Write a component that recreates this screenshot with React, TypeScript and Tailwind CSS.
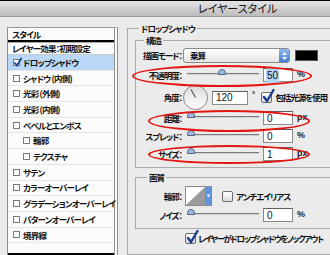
import React from "react";

const leftRows: { label: string; indent?: boolean; checked?: boolean; active?: boolean }[] = [
  { label: "ドロップシャドウ", checked: true, active: true },
  { label: "シャドウ (内側)" },
  { label: "光彩 (外側)" },
  { label: "光彩 (内側)" },
  { label: "ベベルとエンボス" },
  { label: "輪郭", indent: true },
  { label: "テクスチャ", indent: true },
  { label: "サテン" },
  { label: "カラーオーバーレイ" },
  { label: "グラデーションオーバーレイ" },
  { label: "パターンオーバーレイ" },
  { label: "境界線" },
];

const SmallBox = ({ checked }: { checked?: boolean }) => (
  <span className="relative w-[7px] h-[7px] border border-[#7a7a7a] bg-white shrink-0">
    {checked && (
      <svg className="absolute -top-[3px] -left-[1px]" width="10" height="10" viewBox="0 0 10 10">
        <path d="M1.5 5.5 L4 8.5 L8.5 1" stroke="#1d3f9a" strokeWidth="1.8" fill="none" />
      </svg>
    )}
  </span>
);

const AquaCheck = ({ checked }: { checked?: boolean }) => (
  <span className="relative w-[11px] h-[11px] rounded-[2px] border border-[#6d6d6d] bg-gradient-to-b from-white to-[#dcdcdc] shrink-0 block">
    {checked && (
      <svg className="absolute -top-[4px] left-0" width="13" height="14" viewBox="0 0 13 14">
        <path d="M2 8 L5 12 L11.5 1" stroke="#1c3d8f" strokeWidth="2.4" fill="none" strokeLinecap="round" />
      </svg>
    )}
  </span>
);

const Slider = ({ pos }: { pos: number }) => (
  <div className="relative ml-[5px] w-[72px] h-[12px] shrink-0">
    <div className="absolute left-0 right-0 top-[4px] h-[2px] bg-[#7b7b7b] border-b border-[#d0d0d0]" />
    <div
      className="absolute top-0 w-[8px] h-[6px] rounded-t-full bg-[#9db9e2] border border-[#55657d]"
      style={{ left: pos }}
    />
  </div>
);

const NumBox = ({ value, w = 30, selected }: { value: string; w?: number; selected?: boolean }) => (
  <div
    className="ml-[4px] h-[14px] bg-white border border-[#8a8a8a] border-t-[#5e5e5e] flex items-center pl-[2px] font-['Liberation_Sans',sans-serif] font-normal tracking-normal text-[10px] text-[#111] shrink-0"
    style={{ width: w }}
  >
    <span className={selected ? "bg-[#b5d3f5] px-[1px]" : "px-[1px]"}>{value}</span>
  </div>
);

const Unit = ({ u }: { u: string }) => (
  <span className="ml-[4px] font-['Liberation_Sans',sans-serif] tracking-normal text-[9px] text-[#222]">{u}</span>
);

const Label = ({ t }: { t: string }) => (
  <span className="w-[46px] text-right shrink-0 whitespace-nowrap">{t}</span>
);

const Ellipse = ({ l, t, w, h }: { l: number; t: number; w: number; h: number }) => (
  <div
    className="absolute rounded-[50%] border-[2px] border-[#e3140e] pointer-events-none"
    style={{ left: l, top: t, width: w, height: h }}
  />
);

export default function App() {
  return (
    <div className="relative w-[330px] h-[255px] overflow-hidden bg-[#ebebeb] border-t border-black flex flex-col font-['Noto_Sans_CJK_JP',sans-serif] font-bold text-[8.5px] tracking-[-1px] text-[#111] [font-feature-settings:'palt']">
      <div className="h-[16px] shrink-0 bg-gradient-to-b from-[#e4e4e4] to-[#bcbcbc] border-b border-[#9a9a9a] flex items-center pl-[198px] text-[11px] font-normal tracking-normal text-[#111]">
        レイヤースタイル
      </div>

      <div className="flex flex-1 pl-[7px] pt-[10px] min-h-0">
        {/* styles list */}
        <div className="w-[111px] shrink-0 bg-[#fbfbfb] border-l border-[#8c8c8c] border-t border-t-[#9a9a9a] border-r-[4px] border-r-[#8c8c8c] border-double flex flex-col tracking-[-0.8px]">
          <div className="h-[14px] flex items-center pl-[4px] border-b-[2px] border-black">スタイル</div>
          <div className="h-[13px] flex items-center pl-[4px] border-t border-[#aaa] border-b border-b-[#c8c8c8]">
            レイヤー効果：初期設定
          </div>
          {leftRows.map((r) => (
            <div
              key={r.label}
              className={`h-[15.7px] flex items-center gap-[3px] border-b border-[#e6e6e6] ${
                r.indent ? "pl-[15px]" : "pl-[5px]"
              } ${r.active ? "bg-[#b9d7f7]" : ""}`}
            >
              <SmallBox checked={r.checked} />
              <span className="whitespace-nowrap">{r.label}</span>
            </div>
          ))}
          <div className="flex-1" />
          <div className="h-[2px] bg-black" />
        </div>

        {/* settings */}
        <div className="ml-[9px] mt-[1px] flex flex-col">
          <div className="relative w-[230px] border border-[#a9a9a9] pt-[11px] pl-[7px] flex flex-col h-[240px]">
            <span className="absolute -top-[6px] left-[11px] px-[2px] bg-[#ebebeb] leading-[11px]">ドロップシャドウ</span>

            {/* 構造 */}
            <div className="relative w-[230px] border border-[#a9a9a9] pt-[7px] pb-[6px] flex flex-col">
              <span className="absolute -top-[6px] left-[8px] px-[2px] bg-[#ebebeb] leading-[11px]">構造</span>

              <div className="h-[15px] flex items-center">
                <Label t="描画モード：" />
                <div className="ml-[1px] w-[107px] h-[15px] rounded-[3px] border border-[#8a8a8a] bg-gradient-to-b from-white to-[#e6e6e6] flex items-center shrink-0">
                  <span className="pl-[6px] flex-1">乗算</span>
                  <div className="w-[10px] h-full rounded-r-[2px] bg-gradient-to-b from-[#8fb8ee] to-[#3f7fd6] flex flex-col items-center justify-center gap-[2px]">
                    <svg width="5" height="3" viewBox="0 0 5 3"><path d="M0 3 L2.5 0 L5 3Z" fill="#fff" /></svg>
                    <svg width="5" height="3" viewBox="0 0 5 3"><path d="M0 0 L2.5 3 L5 0Z" fill="#fff" /></svg>
                  </div>
                </div>
                <div className="ml-[5px] w-[23px] h-[11px] bg-black border border-[#555] shrink-0" />
              </div>

              <div className="mt-[5px] h-[14px] flex items-center">
                <Label t="不透明度：" />
                <Slider pos={31} />
                <NumBox value="50" selected />
                <Unit u="%" />
              </div>

              <div className="mt-[3px] h-[25px] flex items-center">
                <Label t="角度：" />
                <div className="ml-[1px] w-[25px] h-[25px] rounded-full border border-[#8a8a8a] bg-gradient-to-b from-[#dcdcdc] to-white shrink-0 relative">
                  <svg className="absolute inset-0" width="23" height="23" viewBox="0 0 23 23">
                    <line x1="11.5" y1="11.5" x2="7" y2="3.5" stroke="#333" strokeWidth="1" />
                  </svg>
                </div>
                <NumBox value="120" w={36} />
                <span className="ml-[4px] -mt-[6px] font-['Liberation_Sans',sans-serif] text-[8px]">°</span>
                <span className="ml-[7px]">
                  <AquaCheck checked />
                </span>
                <span className="ml-[3px] whitespace-nowrap">包括光源を使用</span>
              </div>

              <div className="mt-[1px] h-[14px] flex items-center">
                <Label t="距離：" />
                <Slider pos={0} />
                <NumBox value="0" />
                <Unit u="px" />
              </div>

              <div className="mt-[4px] h-[14px] flex items-center">
                <Label t="スプレッド：" />
                <Slider pos={0} />
                <NumBox value="0" />
                <Unit u="%" />
              </div>

              <div className="mt-[4px] h-[14px] flex items-center">
                <Label t="サイズ：" />
                <Slider pos={0} />
                <NumBox value="1" />
                <Unit u="px" />
              </div>
            </div>

            {/* 画質 */}
            <div className="relative mt-[9px] w-[230px] border border-[#a9a9a9] pt-[8px] pb-[6px] flex flex-col">
              <span className="absolute -top-[6px] left-[11px] px-[2px] bg-[#ebebeb] leading-[11px]">画質</span>

              <div className="h-[20px] flex items-center">
                <Label t="輪郭：" />
                <svg className="ml-[3px] shrink-0" width="27" height="20" viewBox="0 0 27 20">
                  <rect x="0.5" y="0.5" width="26" height="19" fill="#fff" stroke="#8a8a8a" />
                  <path d="M1 19 L20 1 L20 19Z" fill="#9b9b9b" />
                  <rect x="20.5" y="0.5" width="6" height="19" fill="#5f95e0" stroke="#8a8a8a" />
                  <path d="M21.8 8.5 L25.2 8.5 L23.5 11.5Z" fill="#fff" />
                </svg>
                <span className="ml-[10px]">
                  <AquaCheck />
                </span>
                <span className="ml-[3px] whitespace-nowrap">アンチエイリアス</span>
              </div>

              <div className="mt-[2px] h-[14px] flex items-center">
                <Label t="ノイズ：" />
                <Slider pos={0} />
                <NumBox value="0" />
                <Unit u="%" />
              </div>
            </div>

            <div className="mt-[3px] h-[12px] flex items-center pl-[50px]">
              <AquaCheck checked />
              <span className="ml-[2px] whitespace-nowrap tracking-[-1.5px]">レイヤーがドロップシャドウをノックアウト</span>
            </div>
          </div>
        </div>
      </div>

      <Ellipse l={132} t={64} w={180} h={22} />
      <Ellipse l={148} t={109} w={162} h={22} />
      <Ellipse l={148} t={144} w={162} h={19} />
    </div>
  );
}
